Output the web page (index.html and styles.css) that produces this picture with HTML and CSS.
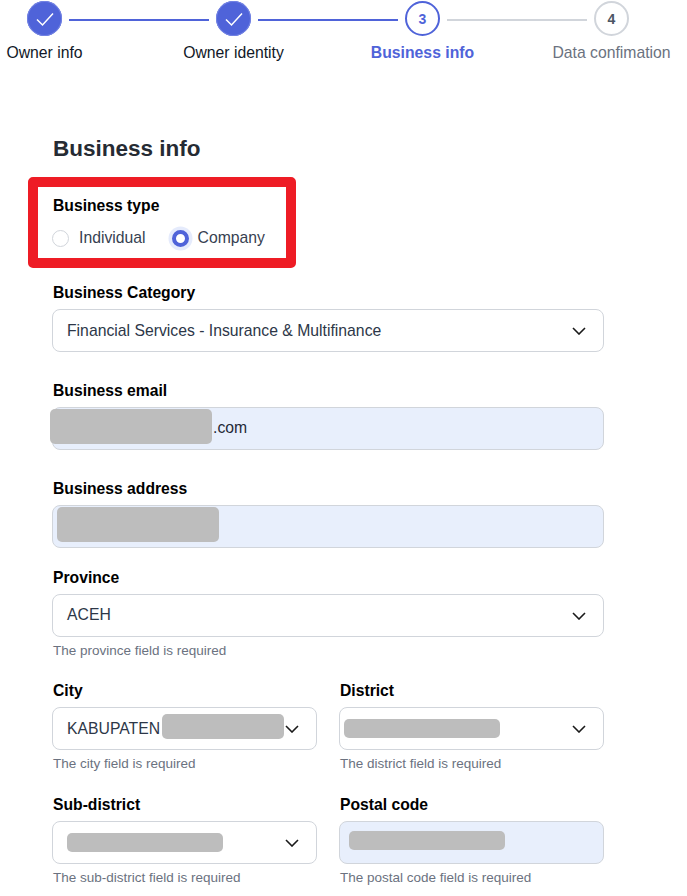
FILE: index.html
```html
<!DOCTYPE html>
<html lang="en">
<head>
<meta charset="utf-8">
<title>Business info</title>
<link rel="stylesheet" href="styles.css">
</head>
<body>
<div class="stepper">
  <div class="step done">
    <span class="circle"><svg width="18" height="18" viewBox="0 0 18 18"><path d="M1 9.5 6.5 15 17 3.5" fill="none" stroke="#fff" stroke-width="1.5"/></svg></span>
    <span class="step-label">Owner info</span>
  </div>
  <span class="line on"></span>
  <div class="step done">
    <span class="circle"><svg width="18" height="18" viewBox="0 0 18 18"><path d="M1 9.5 6.5 15 17 3.5" fill="none" stroke="#fff" stroke-width="1.5"/></svg></span>
    <span class="step-label">Owner identity</span>
  </div>
  <span class="line on"></span>
  <div class="step current">
    <span class="circle">3</span>
    <span class="step-label">Business info</span>
  </div>
  <span class="line"></span>
  <div class="step todo">
    <span class="circle">4</span>
    <span class="step-label">Data confimation</span>
  </div>
</div>

<main class="form">
  <h1 class="title">Business info</h1>

  <section class="type-group">
    <div class="highlight"></div>
    <div class="label">Business type</div>
    <div class="radios">
      <span class="radio"><span class="dot"></span>Individual</span>
      <span class="radio checked"><span class="dot"></span>Company</span>
    </div>
  </section>

  <div class="field cat">
    <div class="label">Business Category</div>
    <div class="control">Financial Services - Insurance &amp; Multifinance
      <svg class="chev" width="14" height="8" viewBox="0 0 14 8"><path d="M1 1l6 6 6-6" fill="none" stroke="#1a1a1a" stroke-width="1.6"/></svg>
    </div>
  </div>

  <div class="field email">
    <div class="label">Business email</div>
    <div class="control filled"><span class="mask m-email"></span><span class="after-mask">.com</span></div>
  </div>

  <div class="field addr">
    <div class="label">Business address</div>
    <div class="control filled"><span class="mask m-addr"></span></div>
  </div>

  <div class="field prov">
    <div class="label">Province</div>
    <div class="control"><span class="raised">ACEH</span>
      <svg class="chev" width="14" height="8" viewBox="0 0 14 8"><path d="M1 1l6 6 6-6" fill="none" stroke="#1a1a1a" stroke-width="1.6"/></svg>
    </div>
    <div class="hint">The province field is required</div>
  </div>

  <div class="grid">
    <div class="field">
      <div class="label">City</div>
      <div class="control">KABUPATEN<span class="mask m-city"></span>
        <svg class="chev" width="14" height="8" viewBox="0 0 14 8"><path d="M1 1l6 6 6-6" fill="none" stroke="#1a1a1a" stroke-width="1.6"/></svg>
      </div>
      <div class="hint">The city field is required</div>
    </div>
    <div class="field">
      <div class="label">District</div>
      <div class="control"><span class="mask m-dist"></span>
        <svg class="chev" width="14" height="8" viewBox="0 0 14 8"><path d="M1 1l6 6 6-6" fill="none" stroke="#1a1a1a" stroke-width="1.6"/></svg>
      </div>
      <div class="hint">The district field is required</div>
    </div>
    <div class="field">
      <div class="label">Sub-district</div>
      <div class="control"><span class="mask m-sub"></span>
        <svg class="chev" width="14" height="8" viewBox="0 0 14 8"><path d="M1 1l6 6 6-6" fill="none" stroke="#1a1a1a" stroke-width="1.6"/></svg>
      </div>
      <div class="hint">The sub-district field is required</div>
    </div>
    <div class="field">
      <div class="label">Postal code</div>
      <div class="control filled"><span class="mask m-post"></span></div>
      <div class="hint">The postal code field is required</div>
    </div>
  </div>
</main>
</body>
</html>
```

FILE: styles.css
```css
* { box-sizing: border-box; }
html, body { margin: 0; padding: 0; background: #fff; }
body {
  width: 687px;
  height: 896px;
  overflow: hidden;
  font-family: "Liberation Sans", Arial, sans-serif;
  font-size: 15.75px;
  color: #1f2937;
}

.stepper {
  display: flex;
  align-items: flex-start;
  gap: 7px;
  padding: 1px 0 0 27px;
  height: 62px;
}
.step {
  width: 35px;
  display: flex;
  flex-direction: column;
  align-items: center;
  flex: none;
}
.circle {
  width: 35px;
  height: 35px;
  border-radius: 50%;
  display: flex;
  align-items: center;
  justify-content: center;
  font-size: 14px;
  font-weight: 700;
  flex: none;
}
.step-label {
  margin-top: 7px;
  white-space: nowrap;
  font-size: 15.75px;
  line-height: 20px;
}
.done .circle { background: #4f63d9; box-shadow: inset 0 0 0 1px #7383e3; }
.done .step-label { color: #111827; }
.current .circle { border: 2px solid #4f63d9; color: #4f63d9; }
.current .step-label { color: #4f63d9; font-weight: 700; }
.todo .circle { border: 2px solid #d1d5db; color: #4b5563; }
.todo .step-label { color: #6b7280; }
.line {
  width: 140px;
  height: 2px;
  margin-top: 18px;
  background: #d1d5db;
  flex: none;
}
.line.on { background: #4f63d9; }

.form { width: 552px; margin-left: 52px; }
.title {
  margin: 0 0 0 1px;
  padding-top: 73px;
  font-size: 22.5px;
  line-height: 28px;
  font-weight: 700;
  color: #262b33;
}

.label {
  margin-left: 1px;
  font-size: 15.7px;
  line-height: 20px;
  font-weight: 700;
  color: #000;
}
.field .label { height: 20px; line-height: 22px; }

.type-group { position: relative; margin-top: 33px; }
.highlight {
  position: absolute;
  left: -24px;
  top: -19px;
  width: 268px;
  height: 91px;
  border: 10px solid #ee1c25;
  border-radius: 5px;
}
.radios { display: flex; gap: 26px; margin-top: 12px; height: 20px; align-items: center; }
.radio { display: inline-flex; align-items: center; gap: 10px; color: #374151; line-height: 20px; }
.radio.checked { gap: 9px; }
.dot {
  width: 17px;
  height: 17px;
  border: 1px solid #d1d5db;
  border-radius: 50%;
  background: #fff;
  flex: none;
}
.checked .dot {
  border: 4px solid #4f63d9;
  box-shadow: 0 0 0 3.5px #e5ebfc;
}

.control {
  position: relative;
  height: 43px;
  margin-top: 7px;
  padding: 0 14px;
  display: flex;
  align-items: center;
  border: 1px solid #d1d5db;
  border-radius: 8px;
  background: #fff;
  color: #2d3748;
}
.control.filled { background: #e8effc; }
.chev { position: absolute; right: 17px; top: 17px; }
.raised { margin-bottom: 2px; }

.cat { margin-top: 34px; }
.email { margin-top: 28px; }
.addr { margin-top: 28px; }
.prov { margin-top: 19px; }

.hint {
  margin: 5px 0 0 1px;
  font-size: 13.5px;
  line-height: 17px;
  color: #6b7280;
}

.grid {
  display: grid;
  grid-template-columns: 265px 265px;
  column-gap: 22px;
  row-gap: 22px;
  margin-top: 21px;
}

.mask {
  position: absolute;
  background: #bdbdbd;
  border-radius: 5px;
}
.after-mask { margin: 0 0 2px 146px; color: #1f2937; }
.m-email { left: -3px; top: 1px; width: 162px; height: 35px; }
.m-addr { left: 4px; top: 1px; width: 162px; height: 35px; }
.m-city { left: 109px; top: 6px; width: 122px; height: 25px; }
.m-dist { left: 4px; top: 11px; width: 156px; height: 19px; }
.m-sub { left: 14px; top: 11px; width: 156px; height: 19px; }
.m-post { left: 9px; top: 9px; width: 156px; height: 19px; }
```
